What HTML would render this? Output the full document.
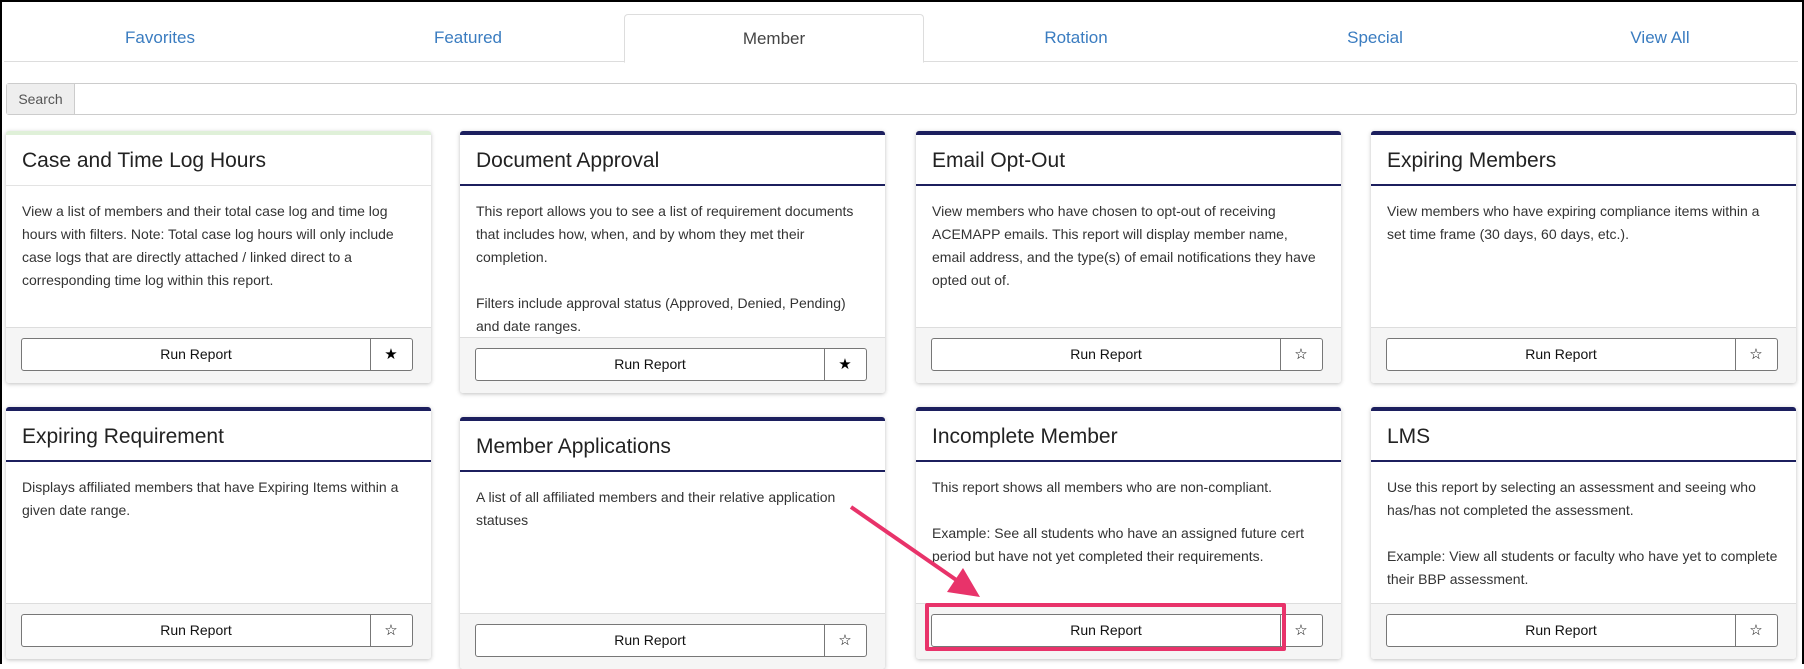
<!DOCTYPE html>
<html><head><meta charset="utf-8"><style>
*{box-sizing:border-box;margin:0;padding:0}
body{width:1804px;height:664px;overflow:hidden;background:#fff;font-family:"Liberation Sans",sans-serif;position:relative}
.frame{position:absolute;left:0;top:0;width:1804px;height:664px;border:2px solid #000;border-bottom:none;z-index:10;pointer-events:none}
.tabline{position:absolute;left:4px;right:6px;top:61px;height:1px;background:#ddd}
.tab{position:absolute;top:14px;height:48px;width:300px;text-align:center;line-height:48px;font-size:17px;color:#3a7cc0}
.tab.act{background:#fff;border:1px solid #ddd;border-bottom:1px solid #fff;border-radius:4px 4px 0 0;color:#444;height:49px}
.search{position:absolute;left:6px;top:83px;width:1791px;height:32px;border:1px solid #ccc;border-radius:3px}
.search span{position:absolute;left:0;top:0;width:68px;height:30px;background:#eee;border-right:1px solid #ccc;font-size:14px;color:#555;line-height:30px;text-align:center}
.card{position:absolute;width:425px;background:#fff;border-top:4px solid #1c1f5e;box-shadow:0 1px 4px rgba(0,0,0,.25);border-radius:3px;overflow:hidden}
.card h3{font-weight:normal;font-size:21px;color:#222;padding:0 16px;height:51px;line-height:52px;border-bottom:2px solid #1c1f5e}
.card p{font-size:14px;color:#333;line-height:23px;padding:14px 16px 0 16px}
.ft{position:absolute;left:0;right:0;bottom:0;height:56px;background:#f5f5f5;border-top:1px solid #ddd}
.btn{position:absolute;left:15px;top:10px;width:392px;height:33px;border:1px solid #777;border-radius:3px;background:#fff;font-size:14px}
.btn .r{position:absolute;left:0;top:0;width:349px;height:31px;line-height:31px;text-align:center;border-right:1px solid #777;color:#111}
.btn .s{position:absolute;right:0;top:0;width:42px;height:31px;line-height:31px;text-align:center;font-size:15px;color:#000}
</style></head><body>
<div class="frame"></div>
<div class="tabline"></div>
<div class="tab" style="left:10px">Favorites</div>
<div class="tab" style="left:318px">Featured</div>
<div class="tab act" style="left:624px">Member</div>
<div class="tab" style="left:926px">Rotation</div>
<div class="tab" style="left:1225px">Special</div>
<div class="tab" style="left:1510px">View All</div>
<div class="search"><span>Search</span></div>

<div class="card" style="left:6px;top:131px;height:252px;border-top-color:#dff0d8"><h3 style="border-bottom:1px solid #e3e3e3">Case and Time Log Hours</h3><p>View a list of members and their total case log and time log hours with filters. Note: Total case log hours will only include case logs that are directly attached / linked direct to a corresponding time log within this report.</p><div class="ft"><div class="btn"><div class="r">Run Report</div><div class="s">★</div></div></div></div>

<div class="card" style="left:460px;top:131px;height:262px"><h3>Document Approval</h3><p>This report allows you to see a list of requirement documents that includes how, when, and by whom they met their completion.<br><br>Filters include approval status (Approved, Denied, Pending) and date ranges.</p><div class="ft"><div class="btn"><div class="r">Run Report</div><div class="s">★</div></div></div></div>

<div class="card" style="left:916px;top:131px;height:252px"><h3>Email Opt-Out</h3><p>View members who have chosen to opt-out of receiving ACEMAPP emails. This report will display member name, email address, and the type(s) of email notifications they have opted out of.</p><div class="ft"><div class="btn"><div class="r">Run Report</div><div class="s">☆</div></div></div></div>

<div class="card" style="left:1371px;top:131px;height:252px"><h3>Expiring Members</h3><p>View members who have expiring compliance items within a set time frame (30 days, 60 days, etc.).</p><div class="ft"><div class="btn"><div class="r">Run Report</div><div class="s">☆</div></div></div></div>

<div class="card" style="left:6px;top:407px;height:252px"><h3>Expiring Requirement</h3><p>Displays affiliated members that have Expiring Items within a given date range.</p><div class="ft"><div class="btn"><div class="r">Run Report</div><div class="s">☆</div></div></div></div>

<div class="card" style="left:460px;top:417px;height:252px"><h3>Member Applications</h3><p>A list of all affiliated members and their relative application statuses</p><div class="ft" style="bottom:auto;top:192px"><div class="btn"><div class="r">Run Report</div><div class="s">☆</div></div></div></div>

<div class="card" style="left:916px;top:407px;height:252px"><h3>Incomplete Member</h3><p>This report shows all members who are non-compliant.<br><br>Example: See all students who have an assigned future cert period but have not yet completed their requirements.</p><div class="ft"><div class="btn"><div class="r">Run Report</div><div class="s">☆</div></div></div></div>

<div class="card" style="left:1371px;top:407px;height:252px"><h3>LMS</h3><p>Use this report by selecting an assessment and seeing who has/has not completed the assessment.<br><br>Example: View all students or faculty who have yet to complete their BBP assessment.</p><div class="ft"><div class="btn"><div class="r">Run Report</div><div class="s">☆</div></div></div></div>

<div style="position:absolute;left:925px;top:603px;width:361px;height:48px;border:4px solid #e8336a;border-radius:2px;z-index:5"></div>
<svg style="position:absolute;left:0;top:0;z-index:6" width="1804" height="664"><line x1="851" y1="507" x2="965" y2="586" stroke="#e8336a" stroke-width="4"/><polygon points="980,597 947,592 963,568" fill="#e8336a"/></svg>
</body></html>
